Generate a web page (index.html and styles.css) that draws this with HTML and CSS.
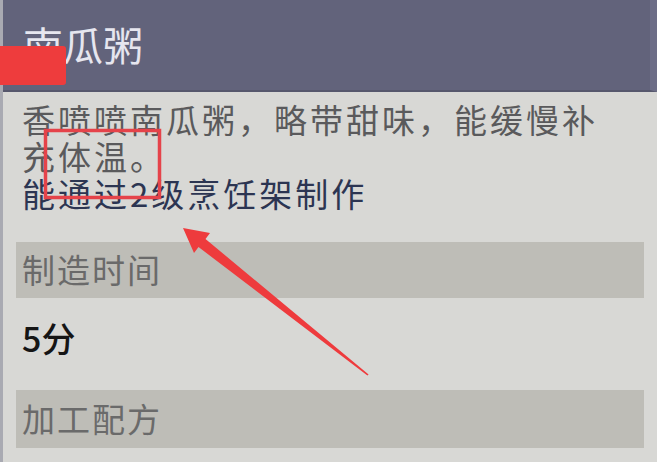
FILE: index.html
```html
<!DOCTYPE html>
<html lang="zh-CN">
<head>
<meta charset="utf-8">
<link rel="stylesheet" href="styles.css">
</head>
<body>
<div class="panel">
  <header class="title-bar">
    <h1 class="title">南瓜粥</h1>
  </header>
  <div class="desc">
    <p class="desc-text">香喷喷南瓜粥，略带甜味，能缓慢补<br>充体温。</p>
    <p class="desc-source">能通过2级烹饪架制作</p>
  </div>
  <div class="section-head">制造时间</div>
  <div class="value">5分</div>
  <div class="section-head section-head-2">加工配方</div>

  <div class="red-tag"></div>
  <svg class="annot" width="657" height="462" viewBox="0 0 657 462">
    <rect x="45.5" y="130.5" width="114" height="67" fill="none" stroke="#e5434a" stroke-width="3.5"/>
    <polygon points="183,228 210,233 205.5,239 368.6,374.5 367.4,375.5 198.5,247 194,253" fill="#ee3b3d"/>
  </svg>
</div>
</body>
</html>
```
FILE: styles.css
```css
* { box-sizing: border-box; }
html, body {
  margin: 0;
  padding: 0;
}
body {
  width: 657px;
  height: 462px;
  overflow: hidden;
  background: #d8d8d5;
  font-family: "Noto Sans CJK SC", "Noto Sans", sans-serif;
}
.panel {
  position: relative;
  width: 657px;
  height: 462px;
  background: #d8d8d5;
  border-left: 3px solid #a9aab2;
}
.title-bar {
  height: 92px;
  background: #62637b;
  border-bottom: 2px solid #56576c;
  border-right: 7px solid #6c6d86;
  padding-left: 20px;
}
.title {
  margin: 0;
  font-size: 40px;
  line-height: 88px;
  font-weight: 400;
  color: #e6e6ef;
}
.desc {
  margin-top: 9px;
  padding-left: 19px;
  font-size: 33px;
  line-height: 37px;
  letter-spacing: 3px;
}
.desc p { margin: 0; }
.desc-text { color: #5a5a5c; }
.desc-source { color: #2c3552; }
.section-head {
  margin: 30px 13px 0 13px;
  height: 56px;
  background: #bebdb7;
  padding-left: 6px;
  font-size: 33px;
  line-height: 54px;
  letter-spacing: 2px;
  color: #6a6a6a;
}
.value {
  margin-top: 20px;
  padding-left: 19px;
  font-size: 34px;
  line-height: 40px;
  font-weight: 500;
  color: #151515;
}
.section-head-2 {
  margin-top: 32px;
  height: 58px;
  line-height: 56px;
}
.red-tag {
  position: absolute;
  left: -3px;
  top: 46px;
  width: 66px;
  height: 39px;
  background: #ee3c3d;
  border-radius: 0 3px 3px 0;
}
.annot {
  position: absolute;
  left: -3px;
  top: 0;
  pointer-events: none;
}
```
